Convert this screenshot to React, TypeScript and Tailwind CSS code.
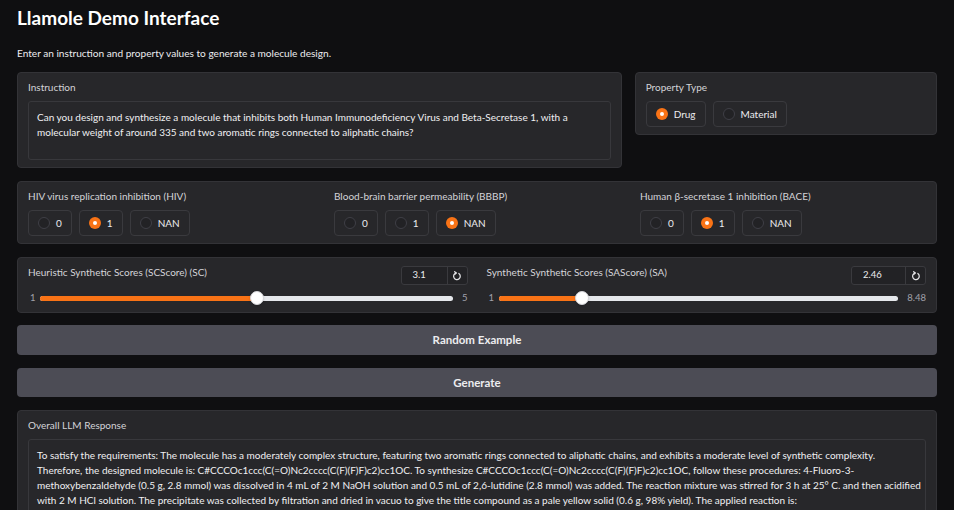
import React from "react";

const font = { fontFamily: "Lato, 'Noto Sans', sans-serif" };

function Radio({ label, checked }: { label: string; checked?: boolean }) {
  return (
    <div className="flex h-[26px] items-center gap-[6px] rounded-[4px] border border-[#3a3a3e] bg-[#27272a] pl-[9px] pr-[9px]">
      {checked ? (
        <span className="flex h-[12px] w-[12px] items-center justify-center rounded-full bg-[#f97316]">
          <span className="h-[4px] w-[4px] rounded-full bg-white" />
        </span>
      ) : (
        <span className="h-[12px] w-[12px] rounded-full border border-[#3f3f46] bg-[#222225]" />
      )}
      <span className="text-[10px] leading-[15px] text-[#ececef]">{label}</span>
    </div>
  );
}

function ResetIcon() {
  return (
    <svg width="10" height="10" viewBox="0 0 12 12" fill="none" stroke="#e4e4e7" strokeWidth="1.5" strokeLinecap="round" strokeLinejoin="round">
      <path d="M5 2.4 A4 4 0 1 0 8.2 3" />
      <path d="M3.2 0.9 L5 2.4 L3.4 4.1" />
    </svg>
  );
}

function Slider({
  label,
  value,
  min,
  max,
  maxLabel,
  boxW,
}: {
  label: string;
  value: number;
  min: number;
  max: number;
  maxLabel: string;
  boxW: string;
}) {
  const frac = (value - min) / (max - min);
  return (
    <div className="flex flex-col">
      <div className="flex items-start justify-between">
        <span className="text-[10px] leading-[15px] text-[#d4d4d8]">{label}</span>
        <div className="mt-[1px] flex h-[19px] rounded-[3px] border border-[#3a3a3e] bg-[#222225]">
          <div className={`${boxW} flex items-center pl-[11px] text-[9.5px] text-[#ececef]`}>{String(value)}</div>
          <div className="flex w-[20px] items-center justify-center border-l border-[#3a3a3e]">
            <ResetIcon />
          </div>
        </div>
      </div>
      <div className="mt-[6px] flex h-[14px] items-center">
        <span className="w-[12px] pl-[2px] text-[9.5px] text-[#a1a1aa]">{min}</span>
        <div className="relative h-[5px] flex-1 rounded-full bg-[#e5e7eb]">
          <div
            className="absolute left-0 top-0 h-[5px] rounded-full bg-[#f97316]"
            style={{ width: `calc(8px + ${frac} * (100% - 14px))` }}
          />
          <div
            className="absolute top-[-4.5px] h-[14px] w-[14px] rounded-full border border-[#d4d4d8] bg-white shadow"
            style={{ left: `calc(1px + ${frac} * (100% - 14px))` }}
          />
        </div>
        <span className="pl-[9px] text-[9.5px] text-[#a1a1aa]">{maxLabel}</span>
      </div>
    </div>
  );
}

export default function App() {
  const block = "rounded-[4px] border border-[#333337] bg-[#27272a] px-[10px] pt-[7px] pb-[7px]";
  const lbl = "block h-[15px] text-[10px] leading-[15px] text-[#d4d4d8]";
  const body = "text-[10px] leading-[15px] text-[#f0f0f2]";
  return (
    <div className="min-h-screen w-full bg-[#0f0f11] px-[17px] pt-[6px] pb-[20px] text-[#e4e4e7]" style={font}>
      <h1 className="text-[19px] font-bold leading-[24px] text-white">Llamole Demo Interface</h1>
      <p className="mt-[15px] text-[10.1px] leading-[16px] text-[#ececef]">
        Enter an instruction and property values to generate a molecule design.
      </p>

      <div className="mt-[11px] grid grid-cols-[2fr_1fr] items-start gap-[13px]">
        <div className={block}>
          <span className={lbl}>Instruction</span>
          <div className={`mt-[6px] h-[59px] rounded-[3px] border border-[#38383c] bg-[#27272a] px-[8px] pt-[8px] ${body}`}>
            <div className="whitespace-nowrap">
              Can you design and synthesize a molecule that inhibits both Human Immunodeficiency Virus and Beta-Secretase 1, with a
            </div>
            <div className="whitespace-nowrap">molecular weight of around 335 and two aromatic rings connected to aliphatic chains?</div>
          </div>
        </div>
        <div className={block}>
          <span className={lbl}>Property Type</span>
          <div className="mt-[6px] flex gap-[7px]">
            <Radio label="Drug" checked />
            <Radio label="Material" />
          </div>
        </div>
      </div>

      <div className={`${block} mt-[13px] grid grid-cols-3 gap-x-[20px]`}>
        {[
          { t: "HIV virus replication inhibition (HIV)", v: "1" },
          { t: "Blood-brain barrier permeability (BBBP)", v: "NAN" },
          { t: "Human β-secretase 1 inhibition (BACE)", v: "1" },
        ].map((g) => (
          <div key={g.t}>
            <span className={lbl}>{g.t}</span>
            <div className="mt-[6px] flex gap-[7px]">
              {["0", "1", "NAN"].map((o) => (
                <Radio key={o} label={o} checked={o === g.v} />
              ))}
            </div>
          </div>
        ))}
      </div>

      <div className={`${block} mt-[13px] grid grid-cols-2 gap-x-[19px]`}>
        <Slider label="Heuristic Synthetic Scores (SCScore) (SC)" value={3.1} min={1} max={5} maxLabel="5" boxW="w-[45px]" />
        <Slider
          label="Synthetic Synthetic Scores (SAScore) (SA)"
          value={2.46}
          min={1}
          max={8.48}
          maxLabel="8.48"
          boxW="w-[53px]"
        />
      </div>

      <button className="mt-[12px] flex h-[30px] w-full items-center justify-center rounded-[4px] bg-[#4c4c55] text-[11.5px] font-bold text-[#ececef]">
        Random Example
      </button>
      <button className="mt-[13px] flex h-[29px] w-full items-center justify-center rounded-[4px] bg-[#4c4c55] text-[11.5px] font-bold text-[#ececef]">
        Generate
      </button>

      <div className={`${block} mt-[13px]`}>
        <span className={lbl}>Overall LLM Response</span>
        <div className={`mt-[6px] h-[120px] rounded-[3px] border border-[#38383c] bg-[#27272a] px-[8px] pt-[8px] ${body}`}>
          <div className="whitespace-nowrap">
            To satisfy the requirements: The molecule has a moderately complex structure, featuring two aromatic rings connected to aliphatic chains, and exhibits a moderate level of synthetic complexity.
          </div>
          <div className="whitespace-nowrap">
            Therefore, the designed molecule is: C#CCCOc1ccc(C(=O)Nc2cccc(C(F)(F)F)c2)cc1OC. To synthesize C#CCCOc1ccc(C(=O)Nc2cccc(C(F)(F)F)c2)cc1OC, follow these procedures: 4-Fluoro-3-
          </div>
          <div className="whitespace-nowrap">
            methoxybenzaldehyde (0.5 g, 2.8 mmol) was dissolved in 4 mL of 2 M NaOH solution and 0.5 mL of 2,6-lutidine (2.8 mmol) was added. The reaction mixture was stirred for 3 h at 25° C. and then acidified
          </div>
          <div className="whitespace-nowrap">
            with 2 M HCl solution. The precipitate was collected by filtration and dried in vacuo to give the title compound as a pale yellow solid (0.6 g, 98% yield). The applied reaction is:
          </div>
        </div>
      </div>
    </div>
  );
}
